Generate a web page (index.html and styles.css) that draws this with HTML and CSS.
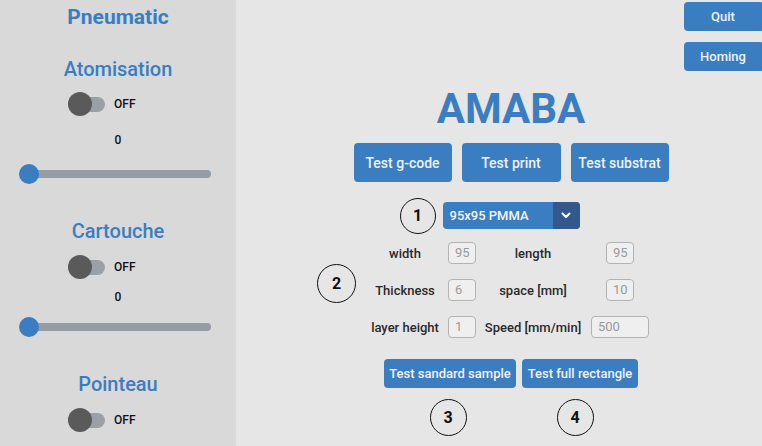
FILE: index.html
```html
<!DOCTYPE html>
<html lang="fr">
<head>
<meta charset="utf-8">
<title>AMABA</title>
<link rel="stylesheet" href="styles.css">
</head>
<body>
<div class="app">
  <aside class="panel">
    <h2 class="panel-title">Pneumatic</h2>

    <section class="group group--first">
      <h3 class="group-title">Atomisation</h3>
      <div class="switch-row"><span class="switch"></span><span class="switch-label">OFF</span></div>
      <div class="value">0</div>
      <div class="slider"><span class="slider-thumb"></span></div>
    </section>

    <section class="group">
      <h3 class="group-title">Cartouche</h3>
      <div class="switch-row"><span class="switch"></span><span class="switch-label">OFF</span></div>
      <div class="value">0</div>
      <div class="slider"><span class="slider-thumb"></span></div>
    </section>

    <section class="group">
      <h3 class="group-title">Pointeau</h3>
      <div class="switch-row"><span class="switch"></span><span class="switch-label">OFF</span></div>
    </section>
  </aside>

  <main class="center">
    <h1 class="brand">AMABA</h1>

    <div class="test-row">
      <button class="btn btn--big">Test g-code</button>
      <button class="btn btn--big btn--wide">Test print</button>
      <button class="btn btn--big">Test substrat</button>
    </div>

    <div class="select">
      <span class="marker marker--select">1</span>
      <span class="select-value">95x95 PMMA</span>
      <span class="select-arrow">
        <svg width="10" height="7" viewBox="0 0 10 7"><polyline points="1.5,1.5 5,5 8.5,1.5" fill="none" stroke="#ffffff" stroke-width="2" stroke-linecap="round" stroke-linejoin="round"/></svg>
      </span>
    </div>

    <div class="params">
      <span class="marker marker--params">2</span>
      <span class="param-label">width</span>
      <span class="param-input">95</span>
      <span class="param-label">length</span>
      <span class="param-input">95</span>

      <span class="param-label">Thickness</span>
      <span class="param-input">6</span>
      <span class="param-label">space [mm]</span>
      <span class="param-input">10</span>

      <span class="param-label">layer height</span>
      <span class="param-input">1</span>
      <span class="param-label">Speed [mm/min]</span>
      <span class="param-input param-input--wide">500</span>
    </div>

    <div class="run-row">
      <div class="run-col">
        <button class="btn btn--small btn--sample">Test sandard sample</button>
        <span class="marker marker--three">3</span>
      </div>
      <div class="run-col">
        <button class="btn btn--small btn--rect">Test full rectangle</button>
        <span class="marker marker--four">4</span>
      </div>
    </div>
  </main>

  <nav class="side-actions">
    <button class="btn btn--side">Quit</button>
    <button class="btn btn--side">Homing</button>
  </nav>
</div>
</body>
</html>
```

FILE: styles.css
```css
* { box-sizing: border-box; }

html, body {
  margin: 0;
  padding: 0;
}

body {
  width: 762px;
  height: 446px;
  overflow: hidden;
  background: #e6e6e6;
  font-family: Roboto, "Liberation Sans", Arial, sans-serif;
  color: #222;
}

.app {
  display: flex;
  height: 446px;
}

/* ---------- left panel ---------- */
.panel {
  width: 236px;
  flex: none;
  background: #d9d9d9;
  padding-top: 5px;
  display: flex;
  flex-direction: column;
}

.panel-title {
  margin: 0;
  text-align: center;
  font-size: 21px;
  line-height: 24px;
  font-weight: 700;
  color: #3b7dc1;
}

.group {
  display: flex;
  flex-direction: column;
  margin-top: 35px;
}

.group--first { margin-top: 28px; }

.group-title {
  margin: 0;
  text-align: center;
  font-size: 20px;
  line-height: 24px;
  font-weight: 500;
  color: #3b7dc1;
}

.switch-row {
  display: flex;
  align-items: center;
  gap: 9px;
  height: 24px;
  margin-top: 12px;
  padding-left: 68px;
}

.group--first .switch-row { margin-top: 11px; }

.switch {
  position: relative;
  width: 37px;
  height: 15px;
  border-radius: 8px;
  background: #9aa0a6;
}

.switch::before {
  content: "";
  position: absolute;
  left: 0;
  top: -5px;
  width: 24px;
  height: 24px;
  border-radius: 50%;
  background: #5a5a5a;
}

.switch-label {
  font-size: 12px;
  font-weight: 500;
  color: #111;
}

.value {
  margin-top: 10px;
  height: 16px;
  line-height: 16px;
  text-align: center;
  font-size: 12px;
  font-weight: 500;
  color: #111;
}

.group--first .value { margin-top: 16px; }

.slider {
  position: relative;
  height: 20px;
  margin: 12px 25px 0 19px;
}

.group--first .slider { margin-top: 16px; }

.slider::before {
  content: "";
  position: absolute;
  left: 1px;
  right: 0;
  top: 6px;
  height: 8px;
  border-radius: 4px;
  background: #959ca3;
}

.slider-thumb {
  position: absolute;
  left: 0;
  top: 0;
  width: 20px;
  height: 20px;
  border-radius: 50%;
  background: #3b7dc1;
}

/* ---------- center ---------- */
.center {
  flex: 1;
  display: flex;
  flex-direction: column;
  align-items: center;
  padding-top: 88px;
  padding-left: 102px;
}

.brand {
  margin: 0;
  font-size: 42px;
  line-height: 42px;
  font-weight: 700;
  color: #3b7dc1;
}

.btn {
  border: none;
  margin: 0;
  padding: 0;
  background: #3b7dc1;
  color: #eef3f9;
  font-family: Roboto, "Liberation Sans", Arial, sans-serif;
  font-weight: 500;
  border-radius: 4px;
  cursor: pointer;
}

.test-row {
  display: flex;
  gap: 10px;
  margin-top: 13px;
}

.btn--big {
  width: 98px;
  height: 39px;
  font-size: 14px;
}

.btn--wide { width: 99px; }

.select {
  position: relative;
  display: flex;
  width: 137px;
  height: 27px;
  margin-top: 20px;
  border-radius: 4px;
  background: #3b7dc1;
}

.select-value {
  flex: 1;
  padding-left: 7px;
  line-height: 27px;
  font-size: 13px;
  font-weight: 500;
  color: #f2f6fa;
}

.select-arrow {
  width: 27px;
  display: flex;
  align-items: center;
  justify-content: center;
  background: #32598a;
  border-radius: 0 4px 4px 0;
}

.marker {
  display: flex;
  align-items: center;
  justify-content: center;
  width: 37px;
  height: 37px;
  border: 1.5px solid #111;
  border-radius: 50%;
  font-size: 16px;
  font-weight: 700;
  color: #111;
}

.marker--select {
  position: absolute;
  right: calc(100% + 7px);
  top: 50%;
  transform: translateY(-50%);
  width: 36px;
  height: 36px;
}

.params {
  position: relative;
  display: grid;
  grid-template-columns: 66px 36px 94px 68px;
  grid-auto-rows: 22px;
  column-gap: 6px;
  row-gap: 15px;
  align-items: center;
  justify-items: center;
  margin-top: 13px;
  margin-left: 4px;
}

.marker--params {
  position: absolute;
  right: calc(100% + 16px);
  top: 22px;
  width: 39px;
  height: 39px;
}

.param-label {
  font-size: 13px;
  font-weight: 500;
  color: #2a2a2a;
  white-space: nowrap;
}

.param-input {
  width: 28px;
  height: 22px;
  padding-left: 6px;
  line-height: 20px;
  border: 1px solid #b3b3b3;
  border-radius: 4px;
  background: #efefef;
  font-size: 13px;
  color: #9a9a9a;
}

.param-input--wide { width: 58px; }

.run-row {
  display: flex;
  gap: 6px;
  margin-top: 21px;
}

.run-col {
  display: flex;
  flex-direction: column;
  align-items: center;
}

.btn--small {
  height: 29px;
  font-size: 13px;
}

.btn--sample { width: 132px; }
.btn--rect { width: 116px; }

.marker--three { margin-top: 11px; margin-right: 4px; }
.marker--four { margin-top: 11px; margin-right: 10px; }

/* ---------- right actions ---------- */
.side-actions {
  width: 78px;
  flex: none;
  display: flex;
  flex-direction: column;
  gap: 11px;
  padding-top: 2px;
}

.btn--side {
  width: 80px;
  height: 29px;
  font-size: 13px;
  padding-right: 2px;
}
```
